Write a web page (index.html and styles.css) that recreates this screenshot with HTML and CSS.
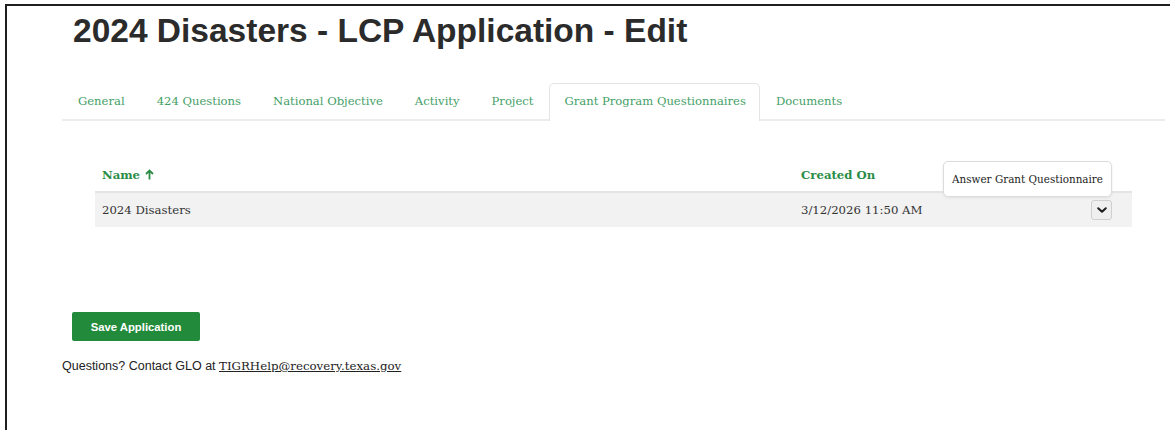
FILE: index.html
```html
<!DOCTYPE html>
<html lang="en">
<head>
<meta charset="utf-8">
<title>2024 Disasters - LCP Application - Edit</title>
<link rel="stylesheet" href="styles.css">
</head>
<body>
<div class="frame">
  <div class="page">
    <h1 class="title">2024 Disasters - LCP Application - Edit</h1>

    <nav class="tabs">
      <a class="tab" href="#">General</a>
      <a class="tab" href="#">424 Questions</a>
      <a class="tab" href="#">National Objective</a>
      <a class="tab" href="#">Activity</a>
      <a class="tab" href="#">Project</a>
      <a class="tab active" href="#">Grant Program Questionnaires</a>
      <a class="tab" href="#">Documents</a>
    </nav>

    <section class="panel">
      <table class="grid">
        <colgroup>
          <col class="c-name">
          <col class="c-date">
          <col class="c-act">
        </colgroup>
        <thead>
          <tr>
            <th>Name <svg class="sort" width="9" height="11" viewBox="0 0 9 11"><path d="M4.5 10.5 V1.5 M1 5 L4.5 1.5 L8 5" fill="none" stroke="#2a8c46" stroke-width="1.8" stroke-linejoin="miter"/></svg></th>
            <th>Created On</th>
            <th></th>
          </tr>
        </thead>
        <tbody>
          <tr>
            <td>2024 Disasters</td>
            <td>3/12/2026 11:50 AM</td>
            <td class="act">
              <div class="menu-wrap">
                <div class="menu">Answer Grant Questionnaire</div>
                <button class="toggle" type="button" aria-label="Actions">
                  <svg width="12" height="12" viewBox="0 0 12 12"><path d="M2.2 4.2 L6 7.8 L9.8 4.2" fill="none" stroke="#1d1d1d" stroke-width="2" stroke-linecap="round" stroke-linejoin="round"/></svg>
                </button>
              </div>
            </td>
          </tr>
        </tbody>
      </table>
    </section>

    <div class="actions">
      <button class="btn-save" type="button">Save Application</button>
    </div>

    <p class="help">Questions? Contact GLO at <a href="#">TIGRHelp@recovery.texas.gov</a></p>
  </div>
</div>
</body>
</html>
```

FILE: styles.css
```css
* { box-sizing: border-box; }

html, body {
  margin: 0;
  padding: 0;
  background: #ffffff;
}

body {
  font-family: "DejaVu Serif", Georgia, serif;
  color: #333333;
}

/* outer window edge: dark rule along the top and left */
.frame {
  margin: 4px 0 0 5px;
  border-top: 2px solid #1f1f1f;
  border-left: 2px solid #1f1f1f;
  min-height: calc(100vh - 4px);
}

.page {
  padding: 5px 5px 0 55px;
}

.title {
  margin: 0 0 0 11px;
  font-family: "Liberation Sans", Arial, sans-serif;
  font-weight: 700;
  font-size: 33.5px;
  line-height: 40px;
  color: #2b2b2b;
}

/* tab strip */
.tabs {
  display: flex;
  margin-top: 32px;
  border-bottom: 2px solid #ececec;
}

.tab {
  display: block;
  padding: 0 15px;
  height: 36px;
  line-height: 34px;
  font-size: 11.6px;
  color: #44a066;
  text-decoration: none;
  border: 1px solid transparent;
  border-bottom: none;
  border-radius: 5px 5px 0 0;
}

.tab.active {
  border-color: #e4e4e4;
  background: #ffffff;
  margin-bottom: -2px;
  height: 38px;
  padding: 0 13px 0 14px;
}

/* questionnaire list */
.panel {
  padding: 38px 33px 0 33px;
}

.grid {
  width: 100%;
  table-layout: fixed;
  border-collapse: collapse;
  font-size: 11.7px;
}

.c-name { width: 699px; }
.c-date { width: 200px; }

.grid th {
  text-align: left;
  font-weight: 700;
  color: #2a8c46;
  height: 33px;
  padding: 0 7px;
  border-bottom: 2px solid #e2e5e8;
  vertical-align: middle;
}

.sort {
  display: inline-block;
  vertical-align: -1px;
  margin-left: 1px;
}

.grid td {
  height: 35px;
  padding: 0 7px;
  background: #f2f2f2;
  color: #333333;
  vertical-align: middle;
}

.grid td.act {
  text-align: right;
  padding-right: 20px;
}

.menu-wrap {
  position: relative;
  display: inline-block;
  vertical-align: middle;
}

/* open action menu, floats above the toggle */
.menu {
  position: absolute;
  right: 0;
  bottom: calc(100% + 3px);
  white-space: nowrap;
  background: #ffffff;
  border: 1px solid #dcdcdc;
  border-radius: 5px;
  box-shadow: 0 1px 3px rgba(0, 0, 0, 0.08);
  padding: 0 8px;
  height: 36px;
  line-height: 34px;
  font-size: 10.4px;
  color: #222222;
  text-align: left;
}

.toggle {
  display: flex;
  align-items: center;
  justify-content: center;
  width: 21px;
  height: 20px;
  padding: 0;
  margin: 0;
  background: #efefef;
  border: 1px solid #cfcfcf;
  border-radius: 3px;
}

.toggle svg { display: block; }

/* footer actions */
.actions {
  padding: 85px 0 0 10px;
}

.btn-save {
  display: block;
  width: 128px;
  height: 29px;
  padding: 0;
  border: none;
  border-radius: 2px;
  background: #228b3b;
  color: #ffffff;
  font-family: "Liberation Sans", Arial, sans-serif;
  font-weight: 700;
  font-size: 11.3px;
}

.help {
  margin: 18px 0 0 0;
  font-family: "Liberation Sans", Arial, sans-serif;
  font-size: 12.5px;
  color: #222222;
}

.help a {
  font-family: "DejaVu Serif", Georgia, serif;
  font-size: 11.8px;
  color: #222222;
  text-decoration: underline;
}
```
